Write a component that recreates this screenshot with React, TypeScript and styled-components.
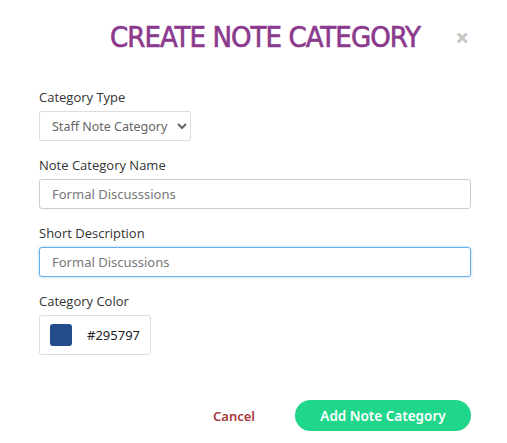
import React from 'react'
import styled, { createGlobalStyle } from 'styled-components'

const GlobalStyle = createGlobalStyle`
  html, body {
    margin: 0;
    padding: 0;
    background: #fff;
  }
  * {
    box-sizing: border-box;
  }
`

const Modal = styled.div`
  width: 507px;
  height: 443px;
  background: #fff;
  padding: 14px 36px 0 39px;
  font-family: 'Open Sans', sans-serif;
`

const Header = styled.div`
  display: flex;
  align-items: center;
  justify-content: space-between;
  height: 46px;
  padding-left: 71px;
  margin-bottom: 28px;
`

const Title = styled.h1`
  margin: 0;
  font-family: 'DejaVu Sans Condensed', 'DejaVu Sans', sans-serif;
  font-stretch: condensed;
  font-weight: 400;
  font-size: 29px;
  letter-spacing: -0.95px;
  -webkit-text-stroke: 0.6px #8b3a8e;
  color: #8b3a8e;
`

const CloseButton = styled.button`
  border: 0;
  background: none;
  padding: 0;
  margin-right: 2px;
  font-family: 'DejaVu Sans', sans-serif;
  font-size: 16px;
  font-weight: 700;
  -webkit-text-stroke: 0.8px #c4c4c4;
  color: #c4c4c4;
  cursor: pointer;
`

const Field = styled.div`
  display: flex;
  flex-direction: column;
  align-items: flex-start;
  margin-bottom: 15px;
`

const Label = styled.label`
  font-size: 13px;
  line-height: 18px;
  color: #333;
  margin-bottom: 5px;
`

const Select = styled.select`
  height: 30px;
  width: 152px;
  padding: 0 4px 0 8px;
  border: 1px solid #ddd;
  border-radius: 2px;
  background: #fff;
  font-family: 'Noto Sans', sans-serif;
  font-size: 12.5px;
  color: #666;
`

const Input = styled.input<{ focused?: boolean }>`
  width: 100%;
  height: 30px;
  padding: 0 12px;
  border: 1px solid ${({ focused }) => (focused ? '#66afe9' : '#ccc')};
  border-radius: 3px;
  box-shadow: ${({ focused }) => (focused ? '0 0 3px rgba(102, 175, 233, 0.6)' : 'none')};
  font-family: 'Noto Sans', sans-serif;
  font-size: 13px;
  color: #777;
  outline: none;
`

const ColorBox = styled.div`
  display: flex;
  align-items: center;
  gap: 15px;
  width: 112px;
  height: 40px;
  padding: 0 10px;
  border: 1px solid #ddd;
  border-radius: 3px;
`

const Swatch = styled.span<{ color: string }>`
  width: 22px;
  height: 22px;
  border-radius: 3px;
  background: ${({ color }) => color};
`

const ColorValue = styled.span`
  font-family: 'Noto Sans', sans-serif;
  font-size: 13px;
  color: #222;
`

const Footer = styled.div`
  display: flex;
  justify-content: flex-end;
  align-items: center;
  gap: 40px;
  margin-top: 45px;
`

const CancelButton = styled.button`
  border: 0;
  background: none;
  padding: 0;
  font-family: 'Noto Sans', sans-serif;
  font-weight: 600;
  font-size: 13px;
  color: #a33b3b;
  cursor: pointer;
`

const PrimaryButton = styled.button`
  height: 31px;
  width: 176px;
  border: 0;
  border-radius: 16px;
  background: #1fd68b;
  font-family: 'Noto Sans', sans-serif;
  font-weight: 600;
  font-size: 13.5px;
  color: #fff;
  cursor: pointer;
`

const App: React.FC = () => {
  return (
    <>
      <GlobalStyle />
      <Modal>
        <Header>
          <Title>CREATE NOTE CATEGORY</Title>
          <CloseButton>×</CloseButton>
        </Header>
        <Field>
          <Label>Category Type</Label>
          <Select defaultValue="staff">
            <option value="staff">Staff Note Category</option>
          </Select>
        </Field>
        <Field>
          <Label>Note Category Name</Label>
          <Input defaultValue="Formal Discusssions" />
        </Field>
        <Field>
          <Label>Short Description</Label>
          <Input focused defaultValue="Formal Discussions" />
        </Field>
        <Field>
          <Label>Category Color</Label>
          <ColorBox>
            <Swatch color="#234d8a" />
            <ColorValue>#295797</ColorValue>
          </ColorBox>
        </Field>
        <Footer>
          <CancelButton>Cancel</CancelButton>
          <PrimaryButton>Add Note Category</PrimaryButton>
        </Footer>
      </Modal>
    </>
  )
}

export default App
